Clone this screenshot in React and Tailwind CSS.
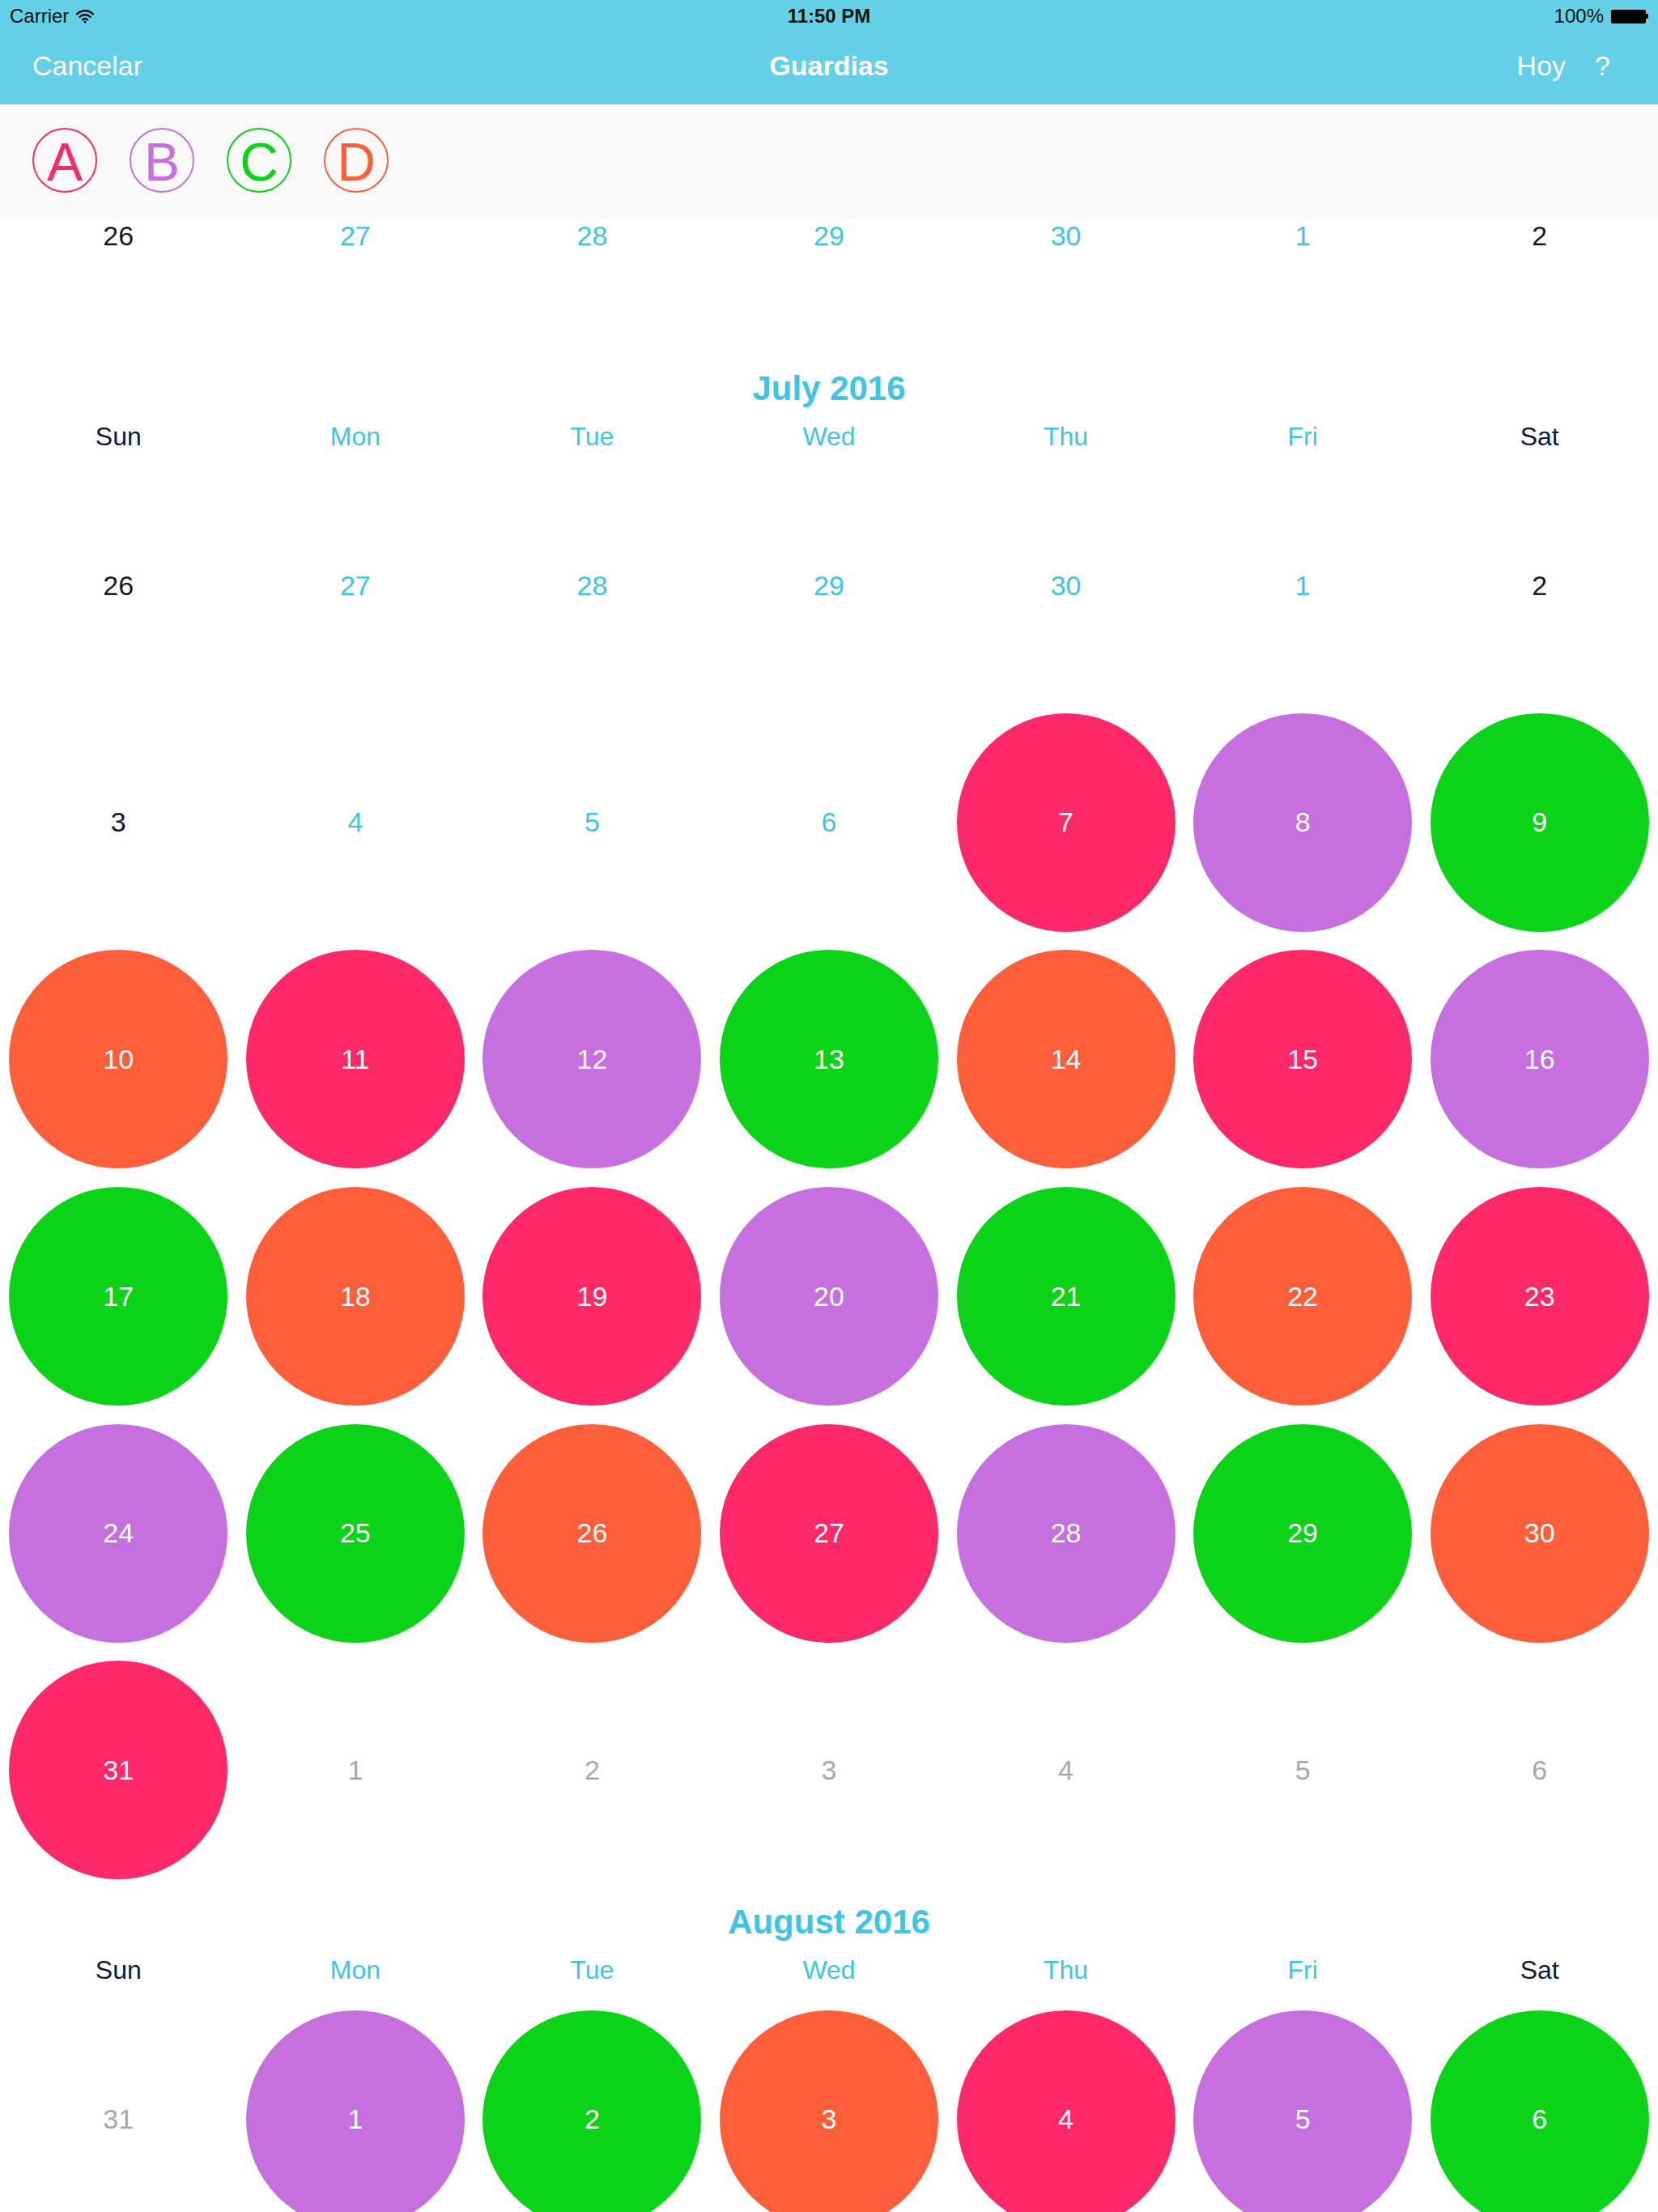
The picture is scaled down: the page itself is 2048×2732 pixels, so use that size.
import React from "react";

const BG = {
  pk: "bg-[#ff2968]",
  pu: "bg-[#c66fdf]",
  gr: "bg-[#0bd318]",
  or: "bg-[#ff5e3a]",
};
const TXT = {
  n: "text-[#121836]",
  c: "text-[#3ec4e5]",
  g: "text-[#a8a8a8]",
};

const ORDER = ["pk", "pu", "gr", "or"];

function Cell({ d, t }) {
  if (BG[t]) {
    return (
      <div className="flex aspect-square items-center justify-center">
        <div
          className={`flex h-[270px] w-[270px] items-center justify-center rounded-full text-[34px] font-medium text-white ${BG[t]}`}
        >
          {d}
        </div>
      </div>
    );
  }
  return (
    <div className={`flex aspect-square items-center justify-center text-[34px] ${TXT[t]}`}>
      {d}
    </div>
  );
}

function Row({ cells }) {
  return (
    <div className="grid grid-cols-7">
      {cells.map(([d, t], i) => (
        <Cell key={i} d={d} t={t} />
      ))}
    </div>
  );
}

function MonthHeader({ title }) {
  const days = ["Sun", "Mon", "Tue", "Wed", "Thu", "Fri", "Sat"];
  return (
    <div className="h-[139px] pt-[17px]">
      <div className="h-[50px] text-center text-[42px] font-bold leading-[50px] text-[#3ec4e5]">
        {title}
      </div>
      <div className="mt-[15px] grid h-[38px] grid-cols-7 text-center text-[32px] leading-[38px]">
        {days.map((d, i) => (
          <div key={d} className={i === 0 || i === 6 ? "text-[#121836]" : "text-[#3ec4e5]"}>
            {d}
          </div>
        ))}
      </div>
    </div>
  );
}

const julyColor = (d) => ORDER[(d - 7) % 4];

const firstRow = [
  [26, "n"],
  [27, "c"],
  [28, "c"],
  [29, "c"],
  [30, "c"],
  [1, "c"],
  [2, "n"],
];

const julyRows = [
  firstRow,
  [
    [3, "n"],
    [4, "c"],
    [5, "c"],
    [6, "c"],
    [7, julyColor(7)],
    [8, julyColor(8)],
    [9, julyColor(9)],
  ],
  [10, 11, 12, 13, 14, 15, 16].map((d) => [d, julyColor(d)]),
  [17, 18, 19, 20, 21, 22, 23].map((d) => [d, julyColor(d)]),
  [24, 25, 26, 27, 28, 29, 30].map((d) => [d, julyColor(d)]),
  [
    [31, julyColor(31)],
    [1, "g"],
    [2, "g"],
    [3, "g"],
    [4, "g"],
    [5, "g"],
    [6, "g"],
  ],
];

const augRows = [
  [[31, "g"], ...[1, 2, 3, 4, 5, 6].map((d) => [d, julyColor(d + 31)])],
];

function Wifi() {
  return (
    <svg width="24" height="18" viewBox="0 0 24 18" className="ml-[8px]">
      <path d="M2 6.5 A14 14 0 0 1 22 6.5" fill="none" stroke="#111" strokeWidth="2.4" strokeLinecap="round" />
      <path d="M5.5 10 A9 9 0 0 1 18.5 10" fill="none" stroke="#111" strokeWidth="2.4" strokeLinecap="round" />
      <path d="M9 13.3 A4.2 4.2 0 0 1 15 13.3" fill="none" stroke="#111" strokeWidth="2.4" strokeLinecap="round" />
      <circle cx="12" cy="16" r="1.6" fill="#111" />
    </svg>
  );
}

function Battery() {
  return (
    <div className="ml-[9px] flex items-center">
      <div className="h-[17px] w-[43px] rounded-[2px] bg-black" />
      <div className="h-[6px] w-[3px] rounded-r-[1px] bg-black" />
    </div>
  );
}

function Badge({ letter, cls }) {
  return (
    <div
      className={`flex h-[80px] w-[80px] items-center justify-center rounded-full border-2 text-[66px] font-normal leading-none ${cls}`}
    >
      <span className="mt-[3px]">{letter}</span>
    </div>
  );
}

export default function App() {
  return (
    <div className="relative h-[2732px] w-[2048px] overflow-hidden bg-white font-['Helvetica_Neue','Liberation_Sans',Arial,sans-serif]">
      {/* Top bars */}
      <div className="relative z-10">
        <div className="h-[128px] bg-[#63d0e8]">
          <div className="relative flex h-[40px] items-center px-[12px] text-[24px] text-[#111]">
            <div className="flex items-center">
              <span>Carrier</span>
              <Wifi />
            </div>
            <div className="absolute left-0 right-0 text-center font-semibold">11:50 PM</div>
            <div className="ml-auto flex items-center">
              <span>100%</span>
              <Battery />
            </div>
          </div>
          <div className="relative flex h-[88px] items-center px-[40px] pb-[6px] text-[34px] text-white">
            <span>Cancelar</span>
            <div className="absolute left-0 right-0 text-center font-semibold">Guardias</div>
            <div className="ml-auto flex items-center gap-[36px] pr-[19px]">
              <span>Hoy</span>
              <span>?</span>
            </div>
          </div>
        </div>
        <div className="h-[1px] bg-[#a9b4b8]" />
        <div className="flex h-[140px] items-center gap-[40px] bg-[#f9f9f9] pl-[40px] pb-[2px]">
          <Badge letter="A" cls="border-[#ff2968] text-[#ff2968]" />
          <Badge letter="B" cls="border-[#c66fdf] text-[#c66fdf]" />
          <Badge letter="C" cls="border-[#0bd318] text-[#0bd318]" />
          <Badge letter="D" cls="border-[#ff5e3a] text-[#ff5e3a]" />
        </div>
      </div>

      {/* Partially visible last row of June */}
      <div className="h-[169px] overflow-hidden">
        <div className="-mt-[124px]">
          <Row cells={firstRow} />
        </div>
      </div>

      {/* July */}
      <MonthHeader title="July 2016" />
      {julyRows.map((r, i) => (
        <Row key={i} cells={r} />
      ))}

      {/* August */}
      <MonthHeader title="August 2016" />
      {augRows.map((r, i) => (
        <Row key={i} cells={r} />
      ))}
    </div>
  );
}
